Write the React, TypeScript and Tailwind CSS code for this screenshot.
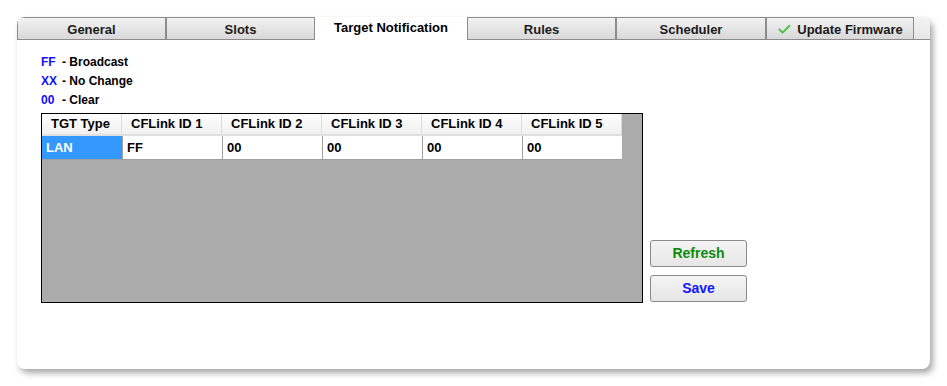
import { Check } from 'lucide-react'

const tabs = [
  { label: 'General', w: 'w-[149px]' },
  { label: 'Slots', w: 'w-[149px]' },
  { label: 'Target Notification', w: 'w-[152px]', active: true },
  { label: 'Rules', w: 'w-[149px]' },
  { label: 'Scheduler', w: 'w-[150px]' },
  { label: 'Update Firmware', w: 'w-[148px]', icon: true },
]

const columns = [
  { label: 'TGT Type', w: 'w-[80px]' },
  { label: 'CFLink ID 1', w: 'w-[100px]' },
  { label: 'CFLink ID 2', w: 'w-[100px]' },
  { label: 'CFLink ID 3', w: 'w-[100px]' },
  { label: 'CFLink ID 4', w: 'w-[100px]' },
  { label: 'CFLink ID 5', w: 'w-[100px]' },
]

const row = ['LAN', 'FF', '00', '00', '00', '00']

export default function App() {
  return (
    <div
      className="w-[947px] h-[386px] bg-white pl-[17px] pt-[17px]"
      style={{ fontFamily: '"Liberation Sans", Arial, sans-serif' }}
    >
      {/* Window panel */}
      <div className="w-[913px] h-[352px] bg-white rounded-[8px] shadow-[3px_4px_6px_rgba(0,0,0,0.35)] overflow-hidden flex flex-col">
        {/* Tabs */}
        <div className="h-[23px] flex items-end bg-gradient-to-b from-[#f4f4f4] to-[#e6e6e6] border-b border-[#8c8c8c] relative">
          {tabs.map(t =>
            t.active ? (
              <div
                key={t.label}
                className={`${t.w} h-[24px] -mb-px bg-white flex items-start justify-center pt-[2px] text-[13px] font-bold text-black relative z-10`}
              >
                {t.label}
              </div>
            ) : (
              <div
                key={t.label}
                className={`${t.w} h-[22px] border border-b-0 border-[#8c8c8c] bg-gradient-to-b from-[#f2f2f2] to-[#d9d9d9] flex items-center justify-center gap-[5px] text-[13px] font-bold text-[#1a1a1a] pt-[2px]`}
              >
                {t.icon && <Check size={15} strokeWidth={3} className="text-[#4cbf4c]" />}
                {t.label}
              </div>
            )
          )}
        </div>

        {/* Body */}
        <div className="pl-[24px] pt-[14px] flex flex-col">
          <div className="flex flex-col gap-[3px] text-[12px] font-bold leading-[16px]">
            <div><span className="text-[#1010ff] inline-block w-[21px]">FF</span><span className="text-black">- Broadcast</span></div>
            <div><span className="text-[#1010ff] inline-block w-[21px]">XX</span><span className="text-black">- No Change</span></div>
            <div><span className="text-[#1010ff] inline-block w-[21px]">00</span><span className="text-black">- Clear</span></div>
          </div>

          <div className="flex items-end gap-[7px] mt-[5px]">
            {/* Grid */}
            <div className="w-[602px] h-[190px] border border-black bg-[#ababab]">
              <div className="flex h-[22px] bg-gradient-to-b from-white to-[#f0f0f0] w-[580px] border-b-[2px] border-[#e0e0e0]">
                {columns.map(c => (
                  <div
                    key={c.label}
                    className={`${c.w} border-r border-[#dcdcdc] flex items-center pl-[9px] text-[13px] font-bold text-black`}
                  >
                    {c.label}
                  </div>
                ))}
              </div>
              <div className="flex h-[24px] w-[580px] bg-white border-b border-[#a0a0a0]">
                {row.map((v, i) => (
                  <div
                    key={i}
                    className={`${columns[i].w} flex items-center pl-[4px] text-[13px] font-bold ${
                      i === 0 ? 'bg-[#3399ff] text-white' : 'bg-white text-black border-l border-[#a0a0a0]'
                    }`}
                  >
                    {v}
                  </div>
                ))}
              </div>
            </div>

            {/* Buttons */}
            <div className="flex flex-col gap-[8px] mb-[1px]">
              <button className="w-[97px] h-[27px] rounded-[3px] border border-[#8a8a8a] bg-gradient-to-b from-[#f4f4f4] to-[#e6e6e6] text-[14px] font-bold text-[#0c8a0c]">
                Refresh
              </button>
              <button className="w-[97px] h-[27px] rounded-[3px] border border-[#8a8a8a] bg-gradient-to-b from-[#f4f4f4] to-[#e6e6e6] text-[14px] font-bold text-[#1414ff]">
                Save
              </button>
            </div>
          </div>
        </div>
      </div>
    </div>
  )
}
